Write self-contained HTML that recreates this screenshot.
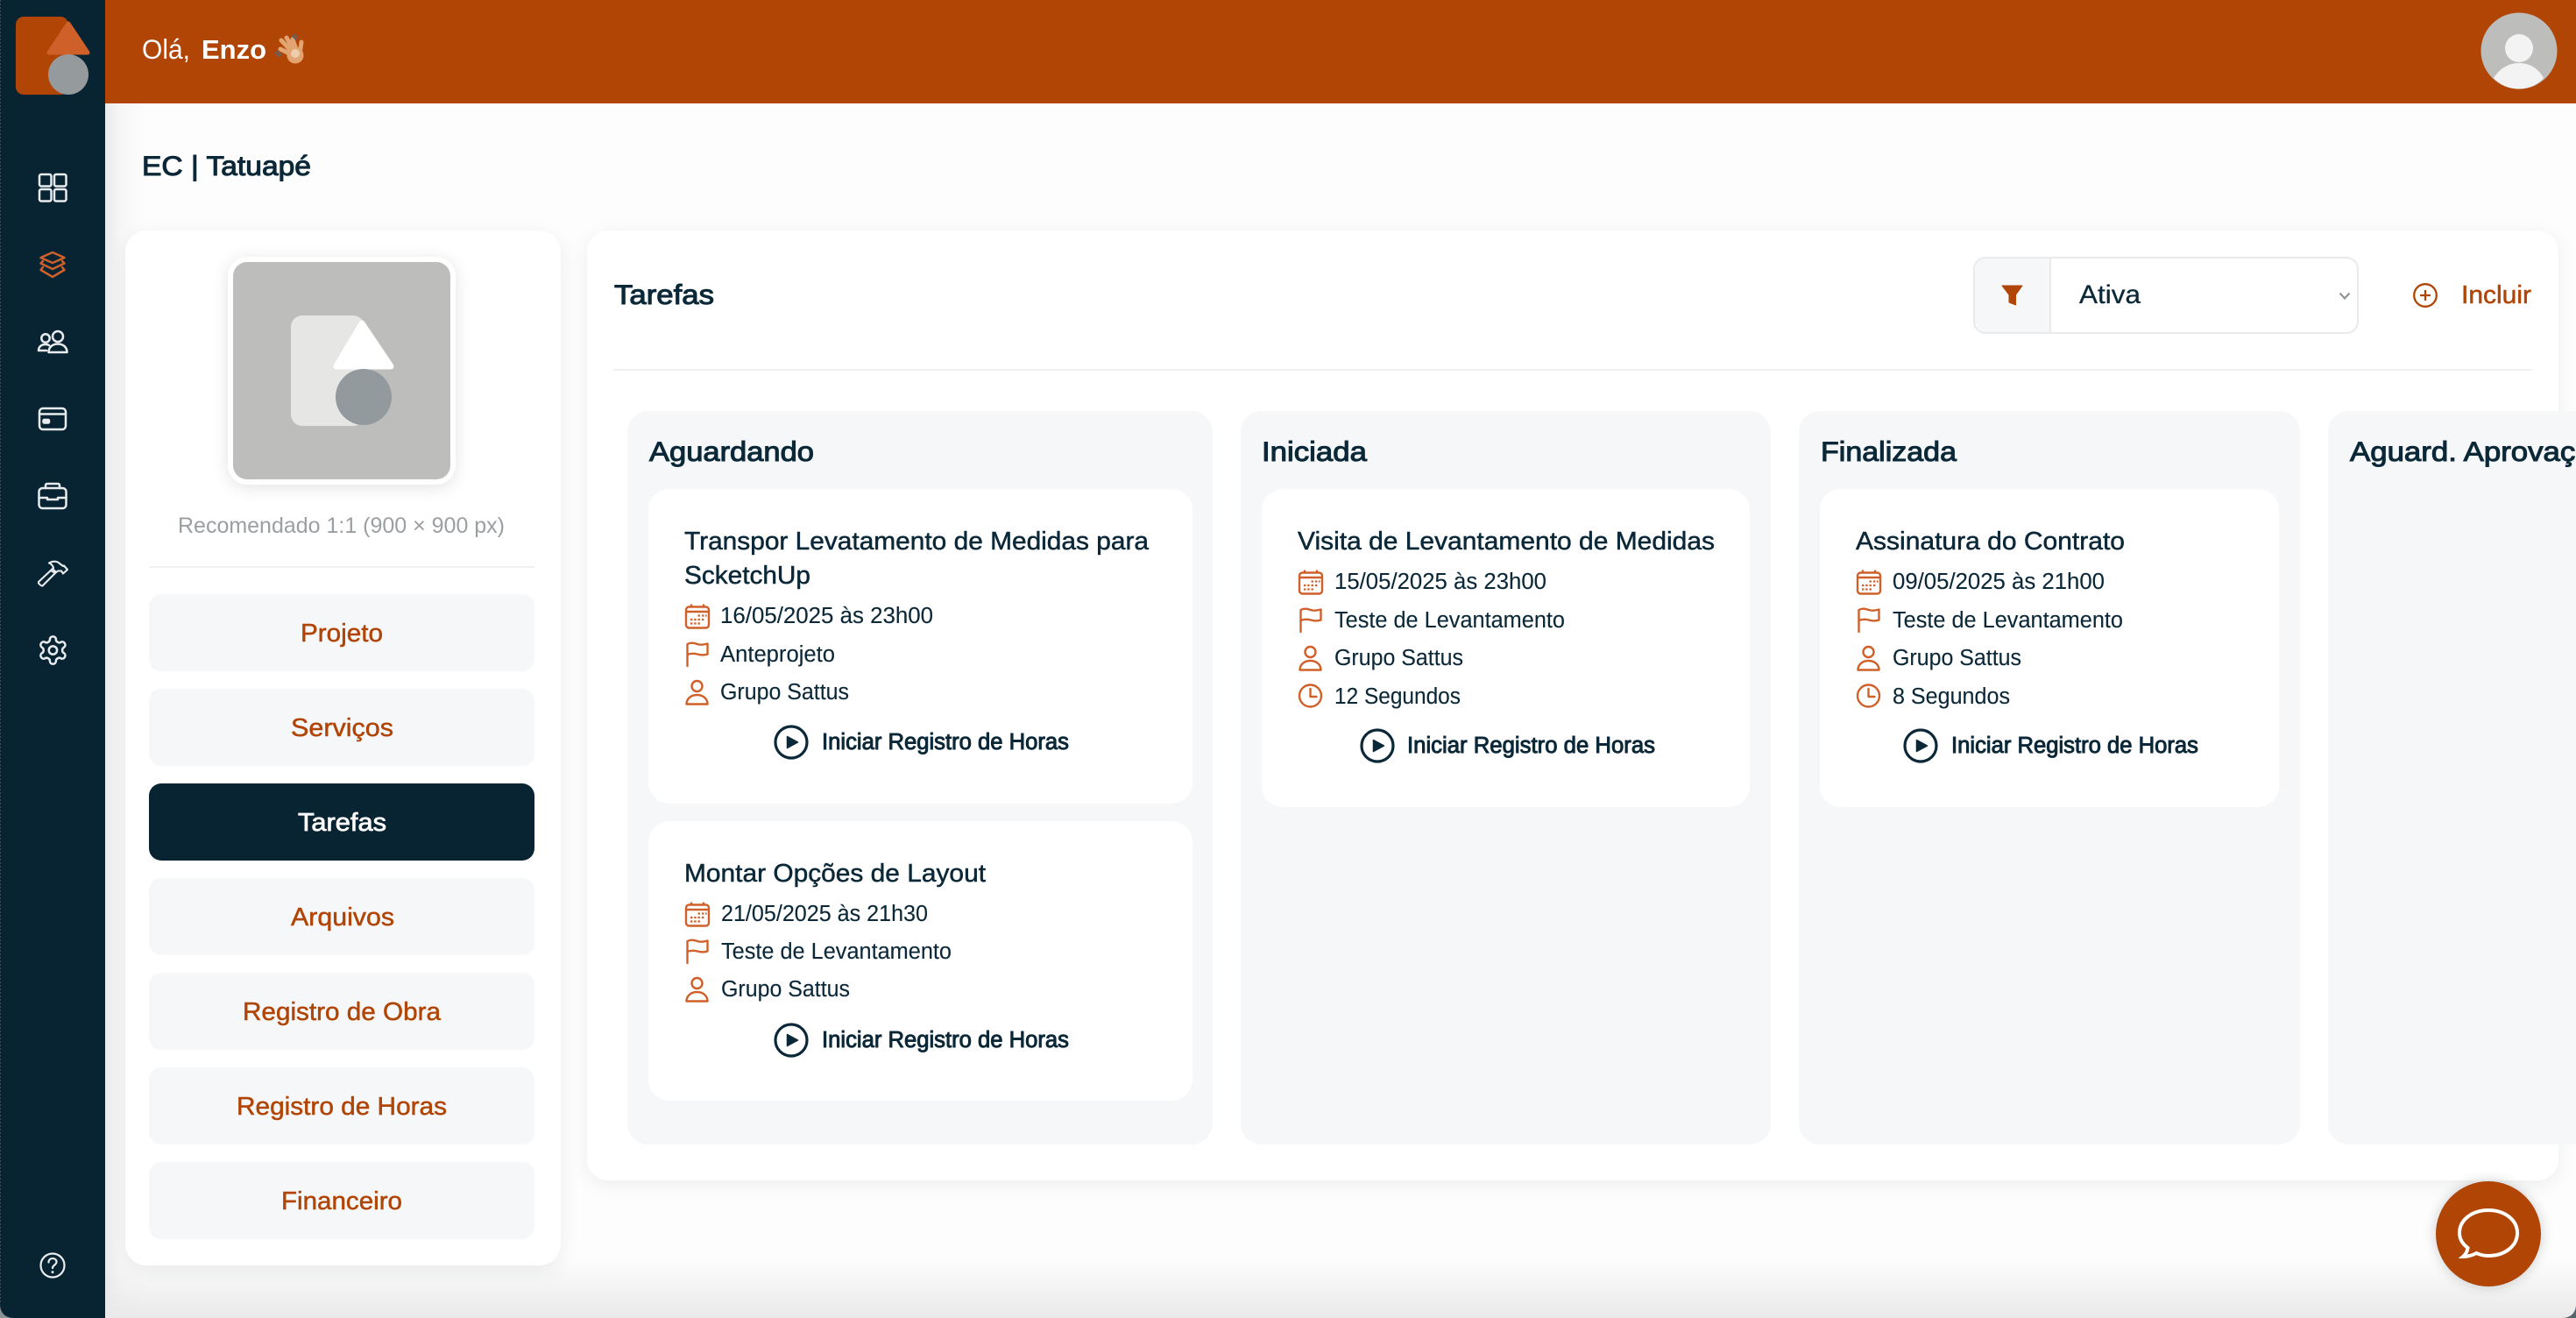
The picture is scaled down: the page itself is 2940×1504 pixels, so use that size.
<!DOCTYPE html>
<html lang="pt-BR">
<head>
<meta charset="utf-8">
<title>EC | Tatuapé - Tarefas</title>
<style>
html,body{margin:0;padding:0;width:2940px;height:1504px;overflow:hidden;background:#fdfdfd}
body{position:relative;font-family:"Liberation Sans",sans-serif}
.b{position:absolute;box-sizing:border-box}
svg.o{position:absolute;left:0;top:0}
text{font-family:"Liberation Sans",sans-serif;white-space:pre}
.wl{font-size:31.5px;fill:#fff}
.wb{font-size:31px;fill:#fff;font-weight:700}
.h{font-size:31.5px;fill:#0b2838;stroke:#0b2838;stroke-width:1.05}
.nav{font-size:29px;fill:#b04506;stroke:#b04506;stroke-width:.5}
.navw{font-size:29px;fill:#fff;stroke:#fff;stroke-width:.75}
.hint{font-size:25px;fill:#9a9fa2}
.tt{font-size:29px;fill:#0b2838;stroke:#0b2838;stroke-width:.5}
.r{font-size:25.5px;fill:#0b2838;stroke:#0b2838;stroke-width:.12}
.p{font-size:25.5px;fill:#0b2838;stroke:#0b2838;stroke-width:.95}
.sel{font-size:29.5px;fill:#0b2838;stroke:#0b2838;stroke-width:.3}
</style>
</head>
<body>
<!-- page gradients -->
<div class="b" style="left:120px;top:118px;width:46px;height:1386px;background:linear-gradient(90deg,#ebebeb,#f7f7f7 40%,#fdfdfd)"></div>
<div class="b" style="left:120px;top:1436px;width:2820px;height:68px;background:linear-gradient(180deg,rgba(232,232,232,0),#e9e9e9)"></div>

<!-- header + sidebar -->
<div class="b" style="left:120px;top:0;width:2820px;height:118px;background:#b04506"></div>
<div class="b" style="left:0;top:0;width:120px;height:1504px;background:#082433"></div>

<!-- left card -->
<div class="b" style="left:143px;top:263px;width:497px;height:1181px;background:#fff;border-radius:24px;box-shadow:0 6px 22px rgba(30,40,50,.08)"></div>
<div class="b" style="left:260px;top:293px;width:260px;height:260px;background:#fff;border-radius:22px;box-shadow:0 3px 18px rgba(30,40,50,.13)"></div>
<div class="b" style="left:266px;top:299px;width:248px;height:248px;background:#bdbdbb;border-radius:16px"></div>
<div class="b" style="left:332px;top:360px;width:84px;height:126px;background:#e6e6e5;border-radius:13px"></div>
<div class="b" style="left:170px;top:646px;width:440px;height:2px;background:#f0f1f2"></div>
<div class="b" style="left:170px;top:678px;width:440px;height:88px;background:#f6f7f9;border-radius:14px"></div>
<div class="b" style="left:170px;top:786px;width:440px;height:88px;background:#f6f7f9;border-radius:14px"></div>
<div class="b" style="left:170px;top:894px;width:440px;height:88px;background:#082433;border-radius:14px"></div>
<div class="b" style="left:170px;top:1002px;width:440px;height:88px;background:#f6f7f9;border-radius:14px"></div>
<div class="b" style="left:170px;top:1110px;width:440px;height:88px;background:#f6f7f9;border-radius:14px"></div>
<div class="b" style="left:170px;top:1218px;width:440px;height:88px;background:#f6f7f9;border-radius:14px"></div>
<div class="b" style="left:170px;top:1326px;width:440px;height:88px;background:#f6f7f9;border-radius:14px"></div>

<!-- main card -->
<div class="b" style="left:670px;top:263px;width:2250px;height:1084px;background:#fff;border-radius:24px;box-shadow:0 5px 20px rgba(30,40,50,.07)"></div>
<div class="b" style="left:700px;top:421px;width:2190px;height:2px;background:#f0f1f2"></div>
<div class="b" style="left:2252px;top:293px;width:440px;height:88px;background:#fff;border:2px solid #e9eaec;border-radius:14px;overflow:hidden"><div style="width:85px;height:84px;background:#f6f7f9;border-right:2px solid #e9eaec"></div></div>

<!-- columns -->
<div class="b" style="left:716px;top:469px;width:668px;height:837px;background:#f6f7f9;border-radius:24px"></div>
<div class="b" style="left:1416px;top:469px;width:605px;height:837px;background:#f6f7f9;border-radius:24px"></div>
<div class="b" style="left:2053px;top:469px;width:572px;height:837px;background:#f6f7f9;border-radius:24px"></div>
<div class="b" style="left:2657px;top:469px;width:320px;height:837px;background:#f6f7f9;border-radius:24px"></div>

<!-- task cards -->
<div class="b" style="left:740px;top:558px;width:621px;height:359px;background:#fff;border-radius:24px"></div>
<div class="b" style="left:740px;top:937px;width:621px;height:319px;background:#fff;border-radius:24px"></div>
<div class="b" style="left:1440px;top:558px;width:557px;height:363px;background:#fff;border-radius:24px"></div>
<div class="b" style="left:2077px;top:558px;width:524px;height:363px;background:#fff;border-radius:24px"></div>

<!-- chat button -->
<div class="b" style="left:2780px;top:1348px;width:120px;height:120px;background:#b04506;border-radius:50%;box-shadow:0 0 14px rgba(30,40,50,.22)"></div>

<svg class="o" width="2940" height="1504" viewBox="0 0 2940 1504" xmlns="http://www.w3.org/2000/svg">
<defs>
<g id="cal" fill="none" stroke="#cf602a" stroke-width="2.4">
  <rect x="1" y="-18.5" width="26" height="24" rx="3.5"/>
  <path d="M1 -13H27M7 -21.5V-18M21 -21.5V-18"/>
  <path d="M14.5 -8.5h2.4M19 -8.5h2.4M23 -8.5h1.6M6 -4h2.4M10.2 -4h2.4M14.5 -4h2.4M19 -4h2.4M6 0.500h2.4M10.2 0.500h2.4M14.5 0.500h2.4" stroke-width="2.3"/>
</g>
<g id="flag" fill="none" stroke="#cf602a" stroke-width="2.4" stroke-linecap="round" stroke-linejoin="round">
  <path d="M2.500 5V-20C8 -23 13 -20 16 -19.500C19 -19 22 -19.500 25.500 -20.500V-8.500C21 -7 18 -7.500 14 -8.500C10 -9.500 6 -9.500 2.500 -8"/>
</g>
<g id="usr" fill="none" stroke="#cf602a" stroke-width="2.4" stroke-linejoin="round">
  <circle cx="13.500" cy="-15" r="6"/>
  <path d="M1.500 5.500C1.500 -1 7 -5 13.500 -5S25.500 -1 25.500 5.500Z"/>
</g>
<g id="clk" fill="none" stroke="#cf602a" stroke-width="2.4" stroke-linecap="round" stroke-linejoin="round">
  <circle cx="13.500" cy="-9" r="12.500"/>
  <path d="M13.500 -17V-8H20.500"/>
</g>
<g id="play">
  <circle cx="0" cy="0" r="18" fill="none" stroke="#0b2838" stroke-width="3.2"/>
  <path d="M-4.500 -6.500L7.500 0L-4.500 6.500Z" fill="#0b2838" stroke="#0b2838" stroke-width="1.500" stroke-linejoin="round"/>
</g>
</defs>

<!-- logo -->
<rect x="18" y="19" width="60" height="89" rx="9" fill="#b04506"/>
<path d="M78 27L56 60H100Z" fill="#cf602a" stroke="#cf602a" stroke-width="5" stroke-linejoin="round"/>
<circle cx="78" cy="85" r="23" fill="#959a9c"/>

<!-- sidebar icons -->
<g fill="none" stroke="#e9ecee" stroke-width="2.500" stroke-linejoin="round" stroke-linecap="round">
  <rect x="45" y="199" width="13.500" height="13.500" rx="2"/>
  <rect x="62" y="199" width="13.500" height="13.500" rx="2"/>
  <rect x="45" y="216" width="13.500" height="13.500" rx="2"/>
  <rect x="62" y="216" width="13.500" height="13.500" rx="2"/>

  <g stroke="#cf602a">
    <path d="M60 288L73.500 294L60 300L46.500 294Z"/>
    <path d="M49 298L46.500 300.500L60 307L73.500 300.500L71 298"/>
    <path d="M49 305L46.500 308L60 316L73.500 308L71 305"/>
  </g>

  <circle cx="66" cy="384" r="6"/>
  <circle cx="52" cy="386" r="4.700"/>
  <path d="M55.500 402C55.500 396 60 392.500 66 392.500S76.500 396 76.500 402Z"/>
  <path d="M44 400C44 395.500 47.500 393 52 393C53.500 393 55 393.300 56 394M44 400H53"/>

  <rect x="45" y="466" width="30" height="24" rx="4"/>
  <path d="M45 472.500H75"/>
  <rect x="49.500" y="479" width="6.500" height="3.500" rx="1" fill="#e9ecee"/>

  <rect x="44.500" y="557" width="31" height="23" rx="4"/>
  <path d="M52 557V554Q52 552 54 552H66Q68 552 68 554V557"/>
  <path d="M44.500 568H54V570H66V568H75.500"/>

  <path d="M44 664L60 649L64 653L48.500 668.500Q47 669 44 665.500ZM58 651L61 648C60 645 58 643 56 642.500C60 640 65 640 68 643L72 646L73 645.500L77 650L72 654.500L70 651.500L66 651.500L63 654Z" stroke-width="2.100"/>

  <g transform="translate(60.400 742) scale(1.560) translate(-12 -12)" stroke-width="1.600">
    <path d="M12.220 2h-.44a2 2 0 0 0-2 2v.18a2 2 0 0 1-1 1.730l-.43.25a2 2 0 0 1-2 0l-.15-.08a2 2 0 0 0-2.730.73l-.22.38a2 2 0 0 0 .73 2.730l.15.1a2 2 0 0 1 1 1.720v.51a2 2 0 0 1-1 1.740l-.15.09a2 2 0 0 0-.73 2.730l.22.38a2 2 0 0 0 2.730.73l.15-.08a2 2 0 0 1 2 0l.43.25a2 2 0 0 1 1 1.730V20a2 2 0 0 0 2 2h.44a2 2 0 0 0 2-2v-.18a2 2 0 0 1 1-1.730l.43-.25a2 2 0 0 1 2 0l.15.08a2 2 0 0 0 2.730-.73l.22-.39a2 2 0 0 0-.73-2.730l-.15-.08a2 2 0 0 1-1-1.740v-.5a2 2 0 0 1 1-1.740l.15-.09a2 2 0 0 0 .73-2.730l-.22-.38a2 2 0 0 0-2.730-.73l-.15.08a2 2 0 0 1-2 0l-.43-.25a2 2 0 0 1-1-1.730V4a2 2 0 0 0-2-2z"/>
    <circle cx="12" cy="12" r="3"/>
  </g>

  <circle cx="60" cy="1444" r="13.500" stroke-width="2.200"/>
  <path d="M55.500 1440.500C55.500 1437.500 57.500 1436 60 1436C62.500 1436 64.500 1437.500 64.500 1440C64.500 1443.500 60 1443.500 60 1447" stroke-width="2.200"/>
  <path d="M60 1451.500V1451.700" stroke-width="2.800"/>
</g>

<!-- header -->
<text x="162" y="67" class="wl" textLength="55" lengthAdjust="spacingAndGlyphs">Olá,</text>
<text x="230" y="67" class="wb" textLength="74" lengthAdjust="spacingAndGlyphs">Enzo</text>
<g fill="none" stroke="#e2a470" stroke-width="5" stroke-linecap="round">
  <path d="M334 63L320 56"/><path d="M335 61L321 46"/><path d="M337 60L327 43"/><path d="M339 59L334 45"/><path d="M342 62L344 48"/>
</g>
<circle cx="337" cy="63" r="9.500" fill="#e2a470"/>
<circle cx="337" cy="61" r="5" fill="#eccdaf"/>
<path d="M333 40L338 46M336 39L340 44M314 60L320 65M316 58L321 63" stroke="#4f6b80" stroke-width="1.400" fill="none"/>

<circle cx="2875" cy="58" r="43.500" fill="#bdbdbb"/>
<circle cx="2875" cy="55" r="16" fill="#f3f3f3"/>
<path d="M2846 89C2853 78 2863 72 2875 72C2887 72 2897 78 2903 89C2896 97 2886 101.500 2875 101.500C2864 101.500 2853 97 2846 89Z" fill="#f3f3f3"/>

<text x="162" y="200" class="h" textLength="193" lengthAdjust="spacingAndGlyphs">EC | Tatuapé</text>

<!-- left card contents -->
<path d="M413 369L384 418H446Z" fill="#fff" stroke="#fff" stroke-width="7" stroke-linejoin="round"/>
<circle cx="415" cy="453" r="32" fill="#939a9e"/>
<text x="203" y="608" class="hint" textLength="373" lengthAdjust="spacingAndGlyphs">Recomendado 1:1 (900 × 900 px)</text>

<text x="343" y="732" class="nav" textLength="94" lengthAdjust="spacingAndGlyphs">Projeto</text>
<text x="332" y="840" class="nav" textLength="117" lengthAdjust="spacingAndGlyphs">Serviços</text>
<text x="340" y="948" class="navw" textLength="101" lengthAdjust="spacingAndGlyphs">Tarefas</text>
<text x="332" y="1056" class="nav" textLength="118" lengthAdjust="spacingAndGlyphs">Arquivos</text>
<text x="277" y="1164" class="nav" textLength="226" lengthAdjust="spacingAndGlyphs">Registro de Obra</text>
<text x="270" y="1272" class="nav" textLength="240" lengthAdjust="spacingAndGlyphs">Registro de Horas</text>
<text x="321" y="1380" class="nav" textLength="138" lengthAdjust="spacingAndGlyphs">Financeiro</text>

<!-- toolbar -->
<text x="701" y="347" class="h" textLength="114" lengthAdjust="spacingAndGlyphs">Tarefas</text>
<path d="M2285 326H2308L2300.500 336.500V348L2293 345V336.500Z" fill="#b04506" stroke="#b04506" stroke-width="1" stroke-linejoin="round"/>
<text x="2373" y="346" class="sel" textLength="70" lengthAdjust="spacingAndGlyphs">Ativa</text>
<path d="M2670.500 334.500L2676 340.500L2681.500 334.500" fill="none" stroke="#8f9598" stroke-width="2.200"/>
<circle cx="2768" cy="337" r="12.800" fill="none" stroke="#b04506" stroke-width="2.300"/>
<path d="M2768 331V343M2762 337H2774" stroke="#b04506" stroke-width="2.300"/>
<text x="2809" y="346" class="nav" textLength="80" lengthAdjust="spacingAndGlyphs">Incluir</text>

<!-- column titles -->
<text x="741" y="526" class="h" textLength="188" lengthAdjust="spacingAndGlyphs">Aguardando</text>
<text x="1440" y="526" class="h" textLength="120" lengthAdjust="spacingAndGlyphs">Iniciada</text>
<text x="2078" y="526" class="h" textLength="155" lengthAdjust="spacingAndGlyphs">Finalizada</text>
<text x="2682" y="526" class="h" textLength="296" lengthAdjust="spacingAndGlyphs">Aguard. Aprovação</text>

<!-- col 1, card 1 -->
<text x="781" y="627" class="tt" textLength="530" lengthAdjust="spacingAndGlyphs">Transpor Levatamento de Medidas para</text>
<text x="781" y="666" class="tt" textLength="144" lengthAdjust="spacingAndGlyphs">ScketchUp</text>
<use href="#cal" x="782" y="711"/>
<text x="822" y="711" class="r" textLength="243" lengthAdjust="spacingAndGlyphs">16/05/2025 às 23h00</text>
<use href="#flag" x="782" y="755"/>
<text x="822" y="755" class="r" textLength="131" lengthAdjust="spacingAndGlyphs">Anteprojeto</text>
<use href="#usr" x="782" y="798"/>
<text x="822" y="798" class="r" textLength="147" lengthAdjust="spacingAndGlyphs">Grupo Sattus</text>
<use href="#play" x="903" y="847"/>
<text x="938" y="855" class="p" textLength="282" lengthAdjust="spacingAndGlyphs">Iniciar Registro de Horas</text>

<!-- col 1, card 2 -->
<text x="781" y="1006" class="tt" textLength="344" lengthAdjust="spacingAndGlyphs">Montar Opções de Layout</text>
<use href="#cal" x="782" y="1051"/>
<text x="823" y="1051" class="r" textLength="236" lengthAdjust="spacingAndGlyphs">21/05/2025 às 21h30</text>
<use href="#flag" x="782" y="1094"/>
<text x="823" y="1094" class="r" textLength="263" lengthAdjust="spacingAndGlyphs">Teste de Levantamento</text>
<use href="#usr" x="782" y="1137"/>
<text x="823" y="1137" class="r" textLength="147" lengthAdjust="spacingAndGlyphs">Grupo Sattus</text>
<use href="#play" x="903" y="1187"/>
<text x="938" y="1195" class="p" textLength="282" lengthAdjust="spacingAndGlyphs">Iniciar Registro de Horas</text>

<!-- col 2 -->
<text x="1481" y="627" class="tt" textLength="476" lengthAdjust="spacingAndGlyphs">Visita de Levantamento de Medidas</text>
<use href="#cal" x="1482" y="672"/>
<text x="1523" y="672" class="r" textLength="242" lengthAdjust="spacingAndGlyphs">15/05/2025 às 23h00</text>
<use href="#flag" x="1482" y="716"/>
<text x="1523" y="716" class="r" textLength="263" lengthAdjust="spacingAndGlyphs">Teste de Levantamento</text>
<use href="#usr" x="1482" y="759"/>
<text x="1523" y="759" class="r" textLength="147" lengthAdjust="spacingAndGlyphs">Grupo Sattus</text>
<use href="#clk" x="1482" y="803"/>
<text x="1523" y="803" class="r" textLength="144" lengthAdjust="spacingAndGlyphs">12 Segundos</text>
<use href="#play" x="1572" y="851"/>
<text x="1606" y="859" class="p" textLength="283" lengthAdjust="spacingAndGlyphs">Iniciar Registro de Horas</text>

<!-- col 3 -->
<text x="2118" y="627" class="tt" textLength="307" lengthAdjust="spacingAndGlyphs">Assinatura do Contrato</text>
<use href="#cal" x="2119" y="672"/>
<text x="2160" y="672" class="r" textLength="242" lengthAdjust="spacingAndGlyphs">09/05/2025 às 21h00</text>
<use href="#flag" x="2119" y="716"/>
<text x="2160" y="716" class="r" textLength="263" lengthAdjust="spacingAndGlyphs">Teste de Levantamento</text>
<use href="#usr" x="2119" y="759"/>
<text x="2160" y="759" class="r" textLength="147" lengthAdjust="spacingAndGlyphs">Grupo Sattus</text>
<use href="#clk" x="2119" y="803"/>
<text x="2160" y="803" class="r" textLength="134" lengthAdjust="spacingAndGlyphs">8 Segundos</text>
<use href="#play" x="2192" y="851"/>
<text x="2227" y="859" class="p" textLength="282" lengthAdjust="spacingAndGlyphs">Iniciar Registro de Horas</text>

<!-- chat icon -->
<path d="M2811 1434C2814.500 1431 2816 1428 2816.500 1424C2810.500 1419.500 2807 1413.500 2807 1407C2807 1392 2821.500 1381 2840 1381C2858.500 1381 2873 1392 2873 1407C2873 1422 2858.500 1433 2840 1433C2835 1433 2831 1432.200 2826.500 1430C2821.500 1432.500 2816.500 1434 2811 1434Z" fill="none" stroke="#fff" stroke-width="4" stroke-linejoin="miter"/>

<!-- window corners -->
<path d="M2940 1488V1504H2924C2934 1504 2940 1498 2940 1488Z" fill="#56636b"/>
<path d="M0 1488V1504H16C6 1504 0 1498 0 1488Z" fill="#8b9296"/>
<path d="M0.500 0V1488" stroke="#3d4c56" stroke-width="1" stroke-dasharray="2 2"/>
</svg>
</body>
</html>
